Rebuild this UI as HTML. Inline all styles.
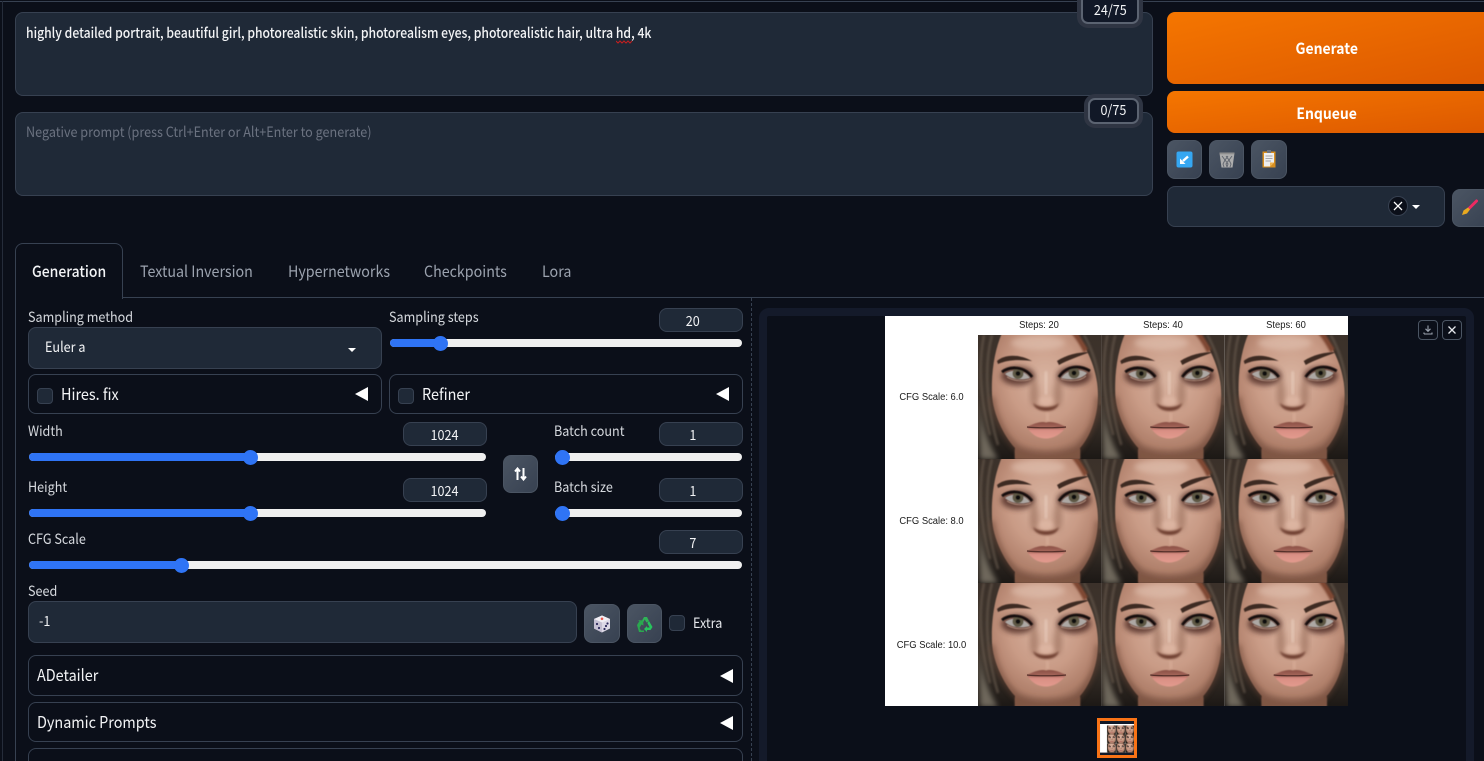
<!DOCTYPE html>
<html lang="en">
<head>
<meta charset="utf-8">
<title>Stable Diffusion WebUI</title>
<style>
html,body{margin:0;padding:0;background:#0b0f19;width:1484px;height:761px;overflow:hidden}
body{position:relative;font-family:"Noto Sans CJK JP","Liberation Sans",sans-serif;color:#e5e7eb;font-size:14px}
.a{position:absolute;box-sizing:border-box}
.t{position:absolute;white-space:nowrap;line-height:20px;height:20px;transform:scaleX(.9);transform-origin:0 50%}
.box{position:absolute;box-sizing:border-box;background:#1f2937;border:1px solid #374151;border-radius:8px}
.acc{position:absolute;box-sizing:border-box;background:#0b0f19;border:1px solid #374151;border-radius:8px}
.num{position:absolute;box-sizing:border-box;background:#1f2937;border:1px solid #374151;border-radius:8px;width:84px;height:24px;line-height:24px;text-align:center;color:#f3f4f6;font-size:14px}
.num span,.or span,.cnt span{display:inline-block;transform:scaleX(.9)}
.r{padding-right:16px}
.btn{position:absolute;box-sizing:border-box;background:linear-gradient(to bottom right,#4b5563,#374151);border:1px solid #4b5563;border-radius:8px}
.chk{position:absolute;box-sizing:border-box;width:16px;height:16px;background:#1f2937;border:1px solid #374151;border-radius:4px}
.tri{position:absolute;width:0;height:0;border-top:7px solid transparent;border-bottom:7px solid transparent;border-right:13px solid #fff}
.tr{position:absolute;height:8px;border-radius:4px;background:#f0f0f0;box-sizing:border-box}
.fl{position:absolute;left:0;top:0;height:8px;border-radius:4px 0 0 4px;background:#2f74f5}
.th{position:absolute;width:15px;height:15px;border-radius:50%;background:#2f74f5;top:-3.5px}
.lbl{color:#d6d9de;font-size:14px}
.big{color:#f3f4f6;font-size:16px}
.tab{color:#9ca3af;font-size:15.5px;transform:scaleX(.92)}
.or{position:absolute;box-sizing:border-box;background:linear-gradient(to bottom right,#f57600,#dc5800);border-radius:8px;color:#fff;font-weight:700;font-size:15.5px;text-align:center}
.cnt{position:absolute;box-sizing:border-box;background:#111827;border:2px solid #5b6371;border-radius:7px;color:#f3f4f6;text-align:center;font-size:14px;box-shadow:0 0 0 4px #2f3543}
.c{position:absolute;font-family:"Liberation Sans",sans-serif;font-size:10px;color:#1a1a1a;line-height:12px;white-space:nowrap;text-align:center;transform:scaleX(.94)}
</style>
</head>
<body>

<!-- page frame lines -->
<div class="a" style="left:0;top:1px;width:1484px;height:1px;background:#374151"></div>
<div class="a" style="left:2px;top:1px;width:1px;height:760px;background:#252c3a"></div>

<!-- prompts -->
<div class="box" style="left:15px;top:12px;width:1138px;height:84px"></div>
<div class="t" style="left:26px;top:23px;color:#f3f4f6;font-size:14px;font-weight:500;transform:scaleX(.87)">highly detailed portrait, beautiful girl, photorealistic skin, photorealism eyes, photorealistic hair, ultra hd, 4k</div>
<svg class="a" style="left:616px;top:39px" width="17" height="5" viewBox="0 0 17 5"><path d="M0 2 L2 4 L4 2 L6 4 L8 2 L10 4 L12 2 L14 4 L16 2" fill="none" stroke="#c81e1e" stroke-width="1"/></svg>
<div class="cnt" style="left:1081px;top:-6px;width:58px;height:30px;line-height:28px"><span>24/75</span></div>

<div class="box" style="left:15px;top:112px;width:1138px;height:84px"></div>
<div class="t" style="left:26px;top:122px;color:#6b7280;font-size:14px">Negative prompt (press Ctrl+Enter or Alt+Enter to generate)</div>
<div class="cnt" style="left:1088px;top:98px;width:51px;height:26px;line-height:20px"><span>0/75</span></div>

<!-- right column -->
<div class="or" style="left:1167px;top:12px;width:330px;height:72px;line-height:73px;padding-right:10px"><span>Generate</span></div>
<div class="or" style="left:1167px;top:91px;width:330px;height:42px;line-height:45px;padding-right:10px"><span>Enqueue</span></div>

<div class="btn" style="left:1167px;top:140px;width:35px;height:39px"></div>
<svg class="a" style="left:1176px;top:151px" width="17" height="17" viewBox="0 0 17 17"><rect width="16" height="16" x=".5" y=".5" rx="2" fill="#35a7f2"/><path d="M12 5.500 L7 10" stroke="#fff" stroke-width="2.400" fill="none"/><path d="M4 13 V7.500 L9.500 13 Z" fill="#fff"/></svg>
<div class="btn" style="left:1209px;top:140px;width:35px;height:39px"></div>
<svg class="a" style="left:1219px;top:152px" width="16" height="16" viewBox="0 0 16 16"><path d="M0.500 1 H15.500 L13.500 15.500 H2.500 Z" fill="#adadad"/><rect x="0.500" y="0.500" width="15" height="1.800" fill="#8f8f8f"/><path d="M3 4 L6 8 L4 12 L5 15 M7 4 L10 8 L7 12 L8 15 M9 4 L6 8 L9 12 L8 15 M13 4 L10 8 L12 12 L11 15" fill="none" stroke="#5f646d" stroke-width=".9"/></svg>
<div class="btn" style="left:1251px;top:140px;width:36px;height:39px"></div>
<svg class="a" style="left:1262px;top:150px" width="14" height="18" viewBox="0 0 14 18"><rect x=".5" y="1.5" width="13" height="16" fill="#d78e1f"/><path d="M2 3 H12 V12.5 L8 16.5 H2 Z" fill="#eeeeee"/><path d="M8 16.5 L12 12.5 H8 Z" fill="#f0b34a"/><rect x="5" y="0" width="4" height="3" fill="#6f7580"/><path d="M3.5 6 H10.5 M3.5 8.5 H10.5 M3.5 11 H9" stroke="#a5a7ab" stroke-width="1"/></svg>

<div class="box" style="left:1167px;top:186px;width:278px;height:41px"></div>
<div class="a" style="left:1388px;top:196px;width:20px;height:20px;border-radius:50%;background:#0b0f19;border:1px solid #374151"></div>
<svg class="a" style="left:1393px;top:201px" width="10" height="10" viewBox="0 0 10 10"><path d="M1 1 L9 9 M9 1 L1 9" stroke="#fff" stroke-width="1.3"/></svg>
<div class="a" style="left:1412px;top:205px;width:0;height:0;border-left:4px solid transparent;border-right:4px solid transparent;border-top:4px solid #fff"></div>
<div class="btn" style="left:1452px;top:189px;width:40px;height:38px"></div>
<svg class="a" style="left:1461px;top:199px" width="17" height="17" viewBox="0 0 17 17"><path d="M15.500 2 L7.500 10" stroke="#ee2a62" stroke-width="3" stroke-linecap="round"/><path d="M7 8.500 L9 10.500 L6 14.500 L1 16 L2.500 11.500 Z" fill="#e9a91f"/></svg>

<!-- tabs -->
<div class="a" style="left:123px;top:297px;width:1361px;height:1px;background:#374151"></div>
<div class="a" style="left:15px;top:243px;width:108px;height:56px;background:#0b0f19;border:1px solid #374151;border-bottom:none;border-radius:8px 8px 0 0"></div>
<div class="a" style="left:15px;top:290px;width:1px;height:471px;background:#374151"></div>
<div class="t" style="left:32px;top:261px;color:#f3f4f6;font-size:15.5px;font-weight:500">Generation</div>
<div class="t tab" style="left:140px;top:261px">Textual Inversion</div>
<div class="t tab" style="left:288px;top:261px">Hypernetworks</div>
<div class="t tab" style="left:424px;top:261px">Checkpoints</div>
<div class="t tab" style="left:542px;top:261px">Lora</div>

<!-- sampling -->
<div class="t lbl" style="left:28px;top:307px">Sampling method</div>
<div class="box" style="left:28px;top:327px;width:354px;height:42px"></div>
<div class="t" style="left:45px;top:337px;color:#f3f4f6">Euler a</div>
<div class="a" style="left:348px;top:348px;width:0;height:0;border-left:4px solid transparent;border-right:4px solid transparent;border-top:4px solid #fff"></div>

<div class="t lbl" style="left:389px;top:307px">Sampling steps</div>
<div class="num r" style="left:659px;top:308px"><span>20</span></div>
<div class="tr" style="left:390px;top:339px;width:352px"><div class="fl" style="width:50px"></div><div class="th" style="left:43px"></div></div>

<!-- hires / refiner -->
<div class="acc" style="left:28px;top:374px;width:354px;height:40px"></div>
<div class="chk" style="left:37px;top:388px"></div>
<div class="t big" style="left:61px;top:383px">Hires. fix</div>
<div class="tri" style="left:355px;top:387px"></div>
<div class="acc" style="left:389px;top:374px;width:354px;height:40px"></div>
<div class="chk" style="left:398px;top:388px"></div>
<div class="t big" style="left:422px;top:383px">Refiner</div>
<div class="tri" style="left:716px;top:387px"></div>

<!-- width / height -->
<div class="t lbl" style="left:28px;top:421px">Width</div>
<div class="num" style="left:403px;top:422px"><span>1024</span></div>
<div class="tr" style="left:29px;top:453px;width:457px"><div class="fl" style="width:222px"></div><div class="th" style="left:214px"></div></div>
<div class="t lbl" style="left:28px;top:477px">Height</div>
<div class="num" style="left:403px;top:478px"><span>1024</span></div>
<div class="tr" style="left:29px;top:509px;width:457px"><div class="fl" style="width:222px"></div><div class="th" style="left:214px"></div></div>

<div class="btn" style="left:503px;top:455px;width:35px;height:38px"></div>
<svg class="a" style="left:514px;top:467px" width="13" height="14" viewBox="0 0 13 14"><path d="M3.5 13 V2 M1 4.5 L3.5 1.5 L6 4.5 M9.5 1 V12 M7 9.5 L9.5 12.5 L12 9.5" fill="none" stroke="#fff" stroke-width="2"/></svg>

<div class="t lbl" style="left:554px;top:421px">Batch count</div>
<div class="num r" style="left:659px;top:422px"><span>1</span></div>
<div class="tr" style="left:555px;top:453px;width:187px"><div class="th" style="left:0"></div></div>
<div class="t lbl" style="left:554px;top:477px">Batch size</div>
<div class="num r" style="left:659px;top:478px"><span>1</span></div>
<div class="tr" style="left:555px;top:509px;width:187px"><div class="th" style="left:0"></div></div>

<!-- cfg -->
<div class="t lbl" style="left:28px;top:529px">CFG Scale</div>
<div class="num r" style="left:659px;top:530px"><span>7</span></div>
<div class="tr" style="left:29px;top:561px;width:713px"><div class="fl" style="width:153px"></div><div class="th" style="left:145px"></div></div>

<!-- seed -->
<div class="t lbl" style="left:28px;top:581px">Seed</div>
<div class="box" style="left:28px;top:601px;width:549px;height:42px"></div>
<div class="t" style="left:39px;top:611px;color:#f3f4f6">-1</div>
<div class="btn" style="left:584px;top:604px;width:36px;height:39px"></div>
<svg class="a" style="left:593px;top:615px" width="18" height="18" viewBox="0 0 18 18"><path d="M9 0.5 L17 4 V13.5 L9 17.5 L1 13.5 V4 Z" fill="#ddd9e6"/><path d="M9 0.5 L17 4 L9 7.5 L1 4 Z" fill="#f1eff5"/><path d="M9 7.5 V17.5 L1 13.5 V4 Z" fill="#c4bfd2"/><circle cx="9" cy="3.8" r="1.3" fill="#e8584f"/><circle cx="4" cy="9" r="1.1" fill="#2d2a5c"/><circle cx="6" cy="13" r="1.1" fill="#2d2a5c"/><circle cx="11.5" cy="14" r="1.1" fill="#2d2a5c"/><circle cx="14.5" cy="8.5" r="1.1" fill="#2d2a5c"/><circle cx="13" cy="11" r="1.1" fill="#2d2a5c"/></svg>
<div class="btn" style="left:627px;top:604px;width:35px;height:39px"></div>
<svg class="a" style="left:636px;top:616px" width="17" height="16" viewBox="0 0 17 16"><path d="M5 6.5 L8 1 H11 L13 5 L10.5 6.5 L8.7 3.5 L7 6.5 Z" fill="#2fb457"/><path d="M13 5 L16.5 11 L14.5 14 H11 V16 L8 13 L11 10 V11.5 H13.7 L11.3 7 Z" fill="#27c45d"/><path d="M1 9 L3.5 5 L1.8 4 L7 4.5 L7.5 9.5 L5.5 8.5 L3.5 12 L5 14.5 H8 V16 H3 Z" fill="#2aa84f"/></svg>
<div class="chk" style="left:669px;top:615px"></div>
<div class="t lbl" style="left:693px;top:613px;color:#e5e7eb">Extra</div>

<!-- accordions -->
<div class="acc" style="left:28px;top:655px;width:715px;height:41px"></div>
<div class="t big" style="left:37px;top:664px">ADetailer</div>
<div class="tri" style="left:720px;top:669px"></div>
<div class="acc" style="left:28px;top:702px;width:715px;height:40px"></div>
<div class="t big" style="left:37px;top:711px">Dynamic Prompts</div>
<div class="tri" style="left:720px;top:716px"></div>
<div class="acc" style="left:28px;top:748px;width:715px;height:40px"></div>

<!-- divider -->
<div class="a" style="left:751px;top:298px;width:0;height:463px;border-left:1px dashed #374151"></div>

<!-- gallery -->
<div class="a" style="left:759px;top:308px;width:715px;height:470px;border:8px solid #141a2a;border-radius:10px;background:#0b0f19"></div>

<svg class="a" style="left:885px;top:316px" width="463" height="390" viewBox="0 0 463 390">
<defs>
<linearGradient id="hair" x1="0" y1="0" x2="0" y2="1"><stop offset="0" stop-color="#3b312a"/><stop offset=".6" stop-color="#40362e"/><stop offset="1" stop-color="#1c1815"/></linearGradient>
<radialGradient id="skin" cx=".5" cy=".36" r=".68"><stop offset="0" stop-color="#d8b3a0"/><stop offset=".5" stop-color="#c99b86"/><stop offset=".8" stop-color="#b0806b"/><stop offset="1" stop-color="#7e5646"/></radialGradient>
<linearGradient id="lip" x1="0" y1="0" x2="0" y2="1"><stop offset="0" stop-color="#8a4f45"/><stop offset=".35" stop-color="#a7685c"/><stop offset=".5" stop-color="#d98f84"/><stop offset="1" stop-color="#e39b8e"/></linearGradient>
<filter id="b05" x="-20%" y="-20%" width="140%" height="140%"><feGaussianBlur stdDeviation=".5"/></filter>
<filter id="b1" x="-20%" y="-20%" width="140%" height="140%"><feGaussianBlur stdDeviation="1"/></filter>
<filter id="b2" x="-30%" y="-30%" width="160%" height="160%"><feGaussianBlur stdDeviation="1.800"/></filter>
<filter id="b3" x="-40%" y="-40%" width="180%" height="180%"><feGaussianBlur stdDeviation="2.6"/></filter>
<clipPath id="cl"><rect width="123.4" height="124"/></clipPath>
<g id="face" clip-path="url(#cl)">
<rect width="124" height="124" fill="url(#hair)"/>
<path d="M1 60 C2 85 8 105 20 124 L2 124 Z" fill="#6e675c" filter="url(#b3)"/>
<path d="M6 0 C-1 35 4 70 12 100 M14 0 C6 30 8 70 20 110 M106 0 C120 25 123 50 122 70" fill="none" stroke="#685a4d" stroke-width="2.400" filter="url(#b1)" opacity=".7"/>
<path d="M24 -2 C17 14 13 36 14 60 C15 78 25 100 37 113 V124 H102 V113 C112 102 120 82 120 60 C120 36 110 14 97 -2 Z" fill="url(#skin)" filter="url(#b05)"/>
<path d="M93 -2 C98 4 102 10 106 18 L110 14 L100 -2 Z" fill="#7e4632" filter="url(#b1)"/>
<ellipse cx="60" cy="8" rx="27" ry="7" fill="#e4c6b6" opacity=".55" filter="url(#b3)"/>
<!-- jaw shading -->
<path d="M14 62 C16 80 26 100 38 113 C50 121 88 121 101 113 C112 100 119 82 120 62" fill="none" stroke="#6b4435" stroke-width="5" opacity=".55" filter="url(#b3)"/>
<path d="M37 114 C52 122 86 122 102 114 V124 H37 Z" fill="#7e5442" opacity=".8" filter="url(#b1)"/>
<!-- eye sockets -->
<ellipse cx="40" cy="41" rx="17" ry="9.500" fill="#54302a" opacity=".85" filter="url(#b3)"/>
<ellipse cx="96" cy="41" rx="17" ry="9.500" fill="#54302a" opacity=".9" filter="url(#b3)"/>
<!-- brows -->
<path d="M19 26 C27 19 41 19 54 26 C41 24.500 30 24.500 20 29 Z" fill="#3d2a23" filter="url(#b05)"/>
<path d="M79 26 C88 20 100 17 112 17 C102 21 90 25 81 30 Z" fill="#3d2a23" filter="url(#b05)"/>
<!-- eyes -->
<g filter="url(#b05)">
<path d="M27 39 C33 34 46 34 52 43 C45 45.500 33 45 27 39 Z" fill="#ada8a4"/>
<path d="M83 43 C89 34 102 33 109 38 C104 45 91 45.500 83 43 Z" fill="#ada8a4"/>
<circle cx="40" cy="38.500" r="5.500" fill="#5e5944"/><circle cx="40" cy="38.500" r="2.400" fill="#100c0a"/>
<circle cx="96" cy="38" r="5.500" fill="#5e5944"/><circle cx="96" cy="38" r="2.400" fill="#100c0a"/>
<path d="M24 37 C32 31 46 31 54 42" fill="none" stroke="#120d0b" stroke-width="2.800"/>
<path d="M81 42 C89 30 102 30 112 36" fill="none" stroke="#120d0b" stroke-width="2.800"/>
<path d="M29 42 C35 46 46 47 53 44 M83 44 C91 47 103 46 108 41" fill="none" stroke="#d9b8a2" stroke-width=".6"/>
</g>
<!-- nose -->
<ellipse cx="56" cy="58" rx="4" ry="14" fill="#926652" opacity=".55" filter="url(#b3)"/>
<ellipse cx="80" cy="58" rx="4" ry="14" fill="#926652" opacity=".55" filter="url(#b3)"/>
<rect x="66.500" y="36" width="3" height="24" rx="1.500" fill="#ecd2c3" opacity=".55" filter="url(#b1)"/>
<ellipse cx="68" cy="66" rx="7" ry="5" fill="#e2bca9" opacity=".65" filter="url(#b2)"/>
<path d="M55 68 C57 75 64 76 68 76 C73 76 79 75 81 68 C77 71 73 72 68 72 C63 72 59 71 55 68 Z" fill="#6f4030" filter="url(#b1)"/>
<rect x="68" y="78" width="3" height="8" fill="#d8ad98" opacity=".7" filter="url(#b1)"/>
<!-- lips -->
<path d="M49 92 C56 88.500 63 86 68 87.500 C74 86 81 88.500 88 92 C82 100.500 74 103.500 68 103.500 C61 103.500 54 100.500 49 92 Z" fill="url(#lip)" filter="url(#b05)"/>
<path d="M49 92 C58 93 78 93 88 92" fill="none" stroke="#56302a" stroke-width="1.200"/>
</g>
</defs>
<rect width="463" height="390" fill="#fff"/>
<use href="#face" x="93" y="19"/><use href="#face" x="216.300" y="19"/><use href="#face" x="339.700" y="19"/>
<use href="#face" x="93" y="143"/><use href="#face" x="216.300" y="143"/><use href="#face" x="339.700" y="143"/>
<use href="#face" x="93" y="267"/><use href="#face" x="216.300" y="267"/><use href="#face" x="339.700" y="267"/>
</svg>
<div class="c" style="left:1001px;top:320px;width:76px">Steps: 20</div>
<div class="c" style="left:1125px;top:320px;width:76px">Steps: 40</div>
<div class="c" style="left:1248px;top:320px;width:76px">Steps: 60</div>
<div class="c" style="left:885px;top:392px;width:93px">CFG Scale: 6.0</div>
<div class="c" style="left:885px;top:516px;width:93px">CFG Scale: 8.0</div>
<div class="c" style="left:885px;top:640px;width:93px">CFG Scale: 10.0</div>

<!-- gallery icons -->
<div class="a" style="left:1418px;top:320px;width:20px;height:20px;border:1px solid #4b5563;border-radius:4px;background:#0b0f19"></div>
<svg class="a" style="left:1423px;top:325px" width="10" height="10" viewBox="0 0 10 10"><path d="M5 0.500 V6 M2.500 3.800 L5 6.300 L7.500 3.800 M1 9 H9 V7.500 M1 9 V7.500" fill="none" stroke="#9ca3af" stroke-width="1.100"/></svg>
<div class="a" style="left:1442px;top:320px;width:20px;height:20px;border:1px solid #4b5563;border-radius:4px;background:#0b0f19"></div>
<svg class="a" style="left:1447px;top:325px" width="10" height="10" viewBox="0 0 10 10"><path d="M1.500 1.500 L8.500 8.500 M8.500 1.500 L1.500 8.500" stroke="#e5e7eb" stroke-width="1.300"/></svg>

<!-- thumbnail -->
<div class="a" style="left:1097px;top:718px;width:40px;height:40px;border:3px solid #f97316;background:#111827;overflow:hidden">
<svg style="position:absolute;left:0;top:3px" width="34" height="28.600" viewBox="0 0 463 390">
<rect width="463" height="390" fill="#fff"/>
<use href="#face" x="93" y="19"/><use href="#face" x="216.300" y="19"/><use href="#face" x="339.700" y="19"/>
<use href="#face" x="93" y="143"/><use href="#face" x="216.300" y="143"/><use href="#face" x="339.700" y="143"/>
<use href="#face" x="93" y="267"/><use href="#face" x="216.300" y="267"/><use href="#face" x="339.700" y="267"/>
</svg>
</div>

</body>
</html>
